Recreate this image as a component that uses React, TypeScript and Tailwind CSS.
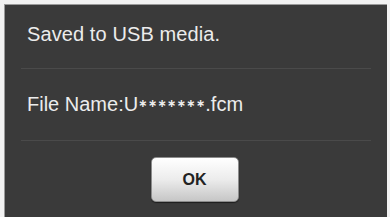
export default function App() {
  return (
    <div className="w-[390px] h-[217px] bg-[#f2f2f2] pl-[4px] pt-[4px] pr-[3px] overflow-hidden font-['Liberation_Sans',Arial,sans-serif]">
      <div className="h-full bg-[#3a3a3a] border-l border-t border-[#9a9a9a] flex flex-col">
        {/* message */}
        <p className="pt-[19px] pl-[22px] text-[20px] leading-5 text-[#ececec] tracking-[0.1px]">
          Saved to USB media.
        </p>
        <div className="mt-[24px] mx-[16px] h-px bg-[#4a4a4a]" />

        {/* file name */}
        <p className="mt-[25px] pl-[22px] text-[20px] leading-5 text-[#ececec] flex items-center">
          File Name:U
          <span className="inline-flex">
            {[0, 1, 2, 3, 4, 5, 6].map(i => (
              <span key={i} className="w-[9.6px] text-center text-[11px] leading-5 font-bold font-['DejaVu_Sans',sans-serif]">∗</span>
            ))}
          </span>
          .fcm
        </p>
        <div className="mt-[26px] mx-[16px] h-px bg-[#4a4a4a]" />

        {/* button */}
        <div className="mt-[16px] flex justify-center pr-[3px]">
          <button className="w-[88px] h-[45px] rounded-[5px] border border-[#8c8c8c] bg-gradient-to-b from-[#ffffff] via-[#ececec] to-[#c6c6c6] text-[#222] font-bold text-[16px] shadow-[0_1px_1px_rgba(0,0,0,0.5)]">
            OK
          </button>
        </div>
      </div>
    </div>
  );
}
